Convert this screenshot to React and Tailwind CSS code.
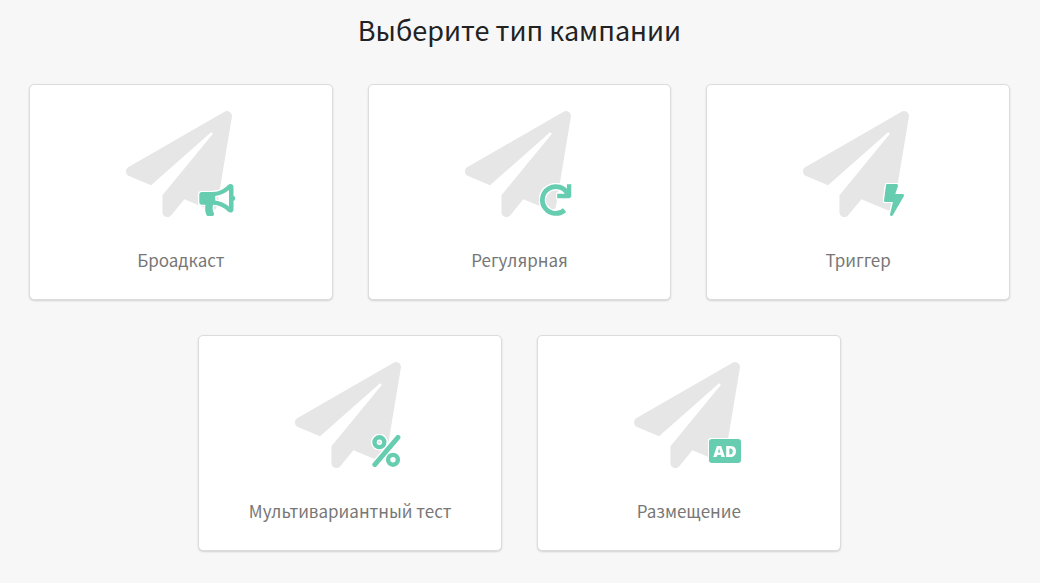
import { FaBolt, FaPaperPlane } from 'react-icons/fa';

const BullhornIcon = ({ className }) => (
  <svg viewBox="0 0 36 32" fill="currentColor" className={className} aria-hidden="true">
    <path
      fillRule="evenodd"
      d="M3 8H14C20 8 25 5 29 1Q31-.6 32.8.2Q34.5 1 34.5 3V11.8Q36.2 12.6 36.2 14.4T34.5 17V25.5Q34.5 27.6 32.8 28.4Q31 29 29 27.4C25 23.4 20 21 14 20.7C13.4 24 13.6 26.5 14.6 28.6C15.6 30.5 14.8 32 13.4 32H9.3Q7.8 32 7.2 30.4C6 27 6 24 6.4 20.7H3Q.3 20.7.3 18V10.7Q.3 8 3 8ZM16.2 12V16.6C21 17.2 26 19.2 30 22.6V6C26 9.4 21 11.5 16.2 12Z"
    />
  </svg>
);

const RedoIcon = ({ className }) => (
  <svg viewBox="0 0 36 32" fill="none" stroke="currentColor" className={className} aria-hidden="true">
    <path d="M29.8 10.1A13.4 13.4 0 1 0 26.6 26.1" strokeWidth="4.8" />
    <path d="M31.1.3V12H19.2" strokeWidth="4.3" strokeLinejoin="round" />
  </svg>
);

const PercentIcon = ({ className }) => (
  <svg viewBox="0 0 36 32" fill="none" stroke="currentColor" className={className} aria-hidden="true">
    <circle cx="11.4" cy="7.2" r="4.9" strokeWidth="4.4" />
    <circle cx="25" cy="24.8" r="4.9" strokeWidth="4.4" />
    <path d="M6.8 29.6L30 2.4" strokeWidth="4.8" strokeLinecap="round" />
  </svg>
);

const AdIcon = ({ className }) => (
  <svg viewBox="0 0 36 32" fill="currentColor" className={className} aria-hidden="true">
    <rect x="2" y="4" width="32" height="24" rx="3" />
    <text
      x="18"
      y="22"
      textAnchor="middle"
      className="fill-white font-['Open_Sans',sans-serif] text-[16px] font-extrabold"
    >
      AD
    </text>
  </svg>
);

const campaignTypes = [
  { id: 'broadcast', label: 'Броадкаст', icon: BullhornIcon },
  { id: 'regular', label: 'Регулярная', icon: RedoIcon },
  { id: 'trigger', label: 'Триггер', icon: FaBolt },
  { id: 'multivariate', label: 'Мультивариантный тест', icon: PercentIcon },
  { id: 'placement', label: 'Размещение', icon: AdIcon },
];

const CampaignCard = ({ label, icon: Icon }) => (
  <button
    type="button"
    className="flex w-[calc((100%-70px)/3)] min-w-60 cursor-pointer flex-col items-center rounded-[5px] border
             border-[#dcdcdc] bg-white px-4 pt-[26px] pb-[27px] shadow-[0_1px_2px_rgba(0,0,0,0.15)]"
  >
    <span className="relative block h-[106px] w-[110px]">
      <FaPaperPlane className="size-[106px] text-[#e6e6e6]" />
      {/* White outline separates the badge from the plane */}
      <Icon className="absolute right-px bottom-px h-8 w-9 overflow-visible text-[#66cdb0] [filter:drop-shadow(1px_0_0_white)_drop-shadow(-1px_0_0_white)_drop-shadow(0_1px_0_white)_drop-shadow(0_-1px_0_white)]" />
    </span>
    <span className="mt-[31px] text-[17px] leading-6 text-[#777777]">{label}</span>
  </button>
);

export default function App() {
  return (
    <main className="min-h-screen bg-[#f7f7f7] pt-3 pr-[30px] pb-8 pl-[29px] font-['Noto_Sans_CJK_SC',sans-serif]">
      <h1 className="text-center text-[27px] leading-9 text-[#222222]">Выберите тип кампании</h1>
      <div className="mt-9 flex flex-wrap justify-center gap-[35px]">
        {campaignTypes.map((type) => (
          <CampaignCard key={type.id} label={type.label} icon={type.icon} />
        ))}
      </div>
    </main>
  );
}
